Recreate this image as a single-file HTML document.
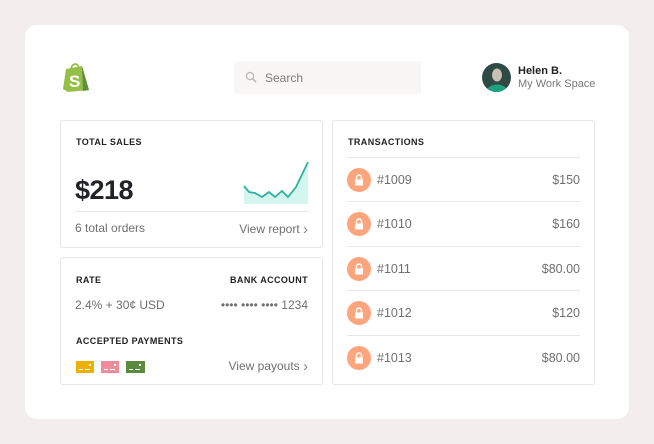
<!DOCTYPE html>
<html><head><meta charset="utf-8"><style>
*{margin:0;padding:0;box-sizing:border-box}
body{width:654px;height:444px;background:#f4eded;font-family:"Liberation Sans",sans-serif;position:relative;overflow:hidden;color:#212326}
.card{position:absolute;left:25px;top:25px;width:604px;height:394px;background:#fff;border-radius:12px}
.panel{position:absolute;border:1px solid #e6e6e6;border-radius:3px;background:#fff}
.lbl{position:absolute;font-size:9px;font-weight:bold;letter-spacing:.4px;color:#222}
.g{position:absolute;font-size:12px;color:#6f6f6f}
.g b{font-weight:normal;font-size:15px;color:#888;position:relative;top:1px}
.row{position:absolute;left:14px;right:14px;height:44px;border-top:1px solid #e8e8e8}
.ic{position:absolute;left:0;top:10px;width:24px;height:24px;border-radius:50%;background:#fea57e}
.ic svg{position:absolute;left:7px;top:6px}
.row .id{position:absolute;left:30px;top:15px;font-size:12.5px;color:#6f6f6f}
.row .amt{position:absolute;right:0;top:15px;font-size:12.5px;color:#6f6f6f}
</style></head><body>
<div class="card"></div>
<svg style="position:absolute;left:62px;top:62px" width="28" height="30" viewBox="0 0 28 30">
<path d="M9 8 C9 1 16 0 17 6" fill="none" stroke="#95bf47" stroke-width="1.8"/>
<path d="M1 27 L4 7 L20 4 L27 28 L6 30 Z" fill="#95bf47"/>
<path d="M20 4 L27 28 L21 29 Z" fill="#5e8e3e"/>
<text x="7" y="25" font-family="Liberation Sans" font-weight="bold" font-size="17" fill="#fff">S</text>
</svg>
<div style="position:absolute;left:234px;top:61px;width:187px;height:33px;background:#f8f7f5;border-radius:2px"></div>
<svg style="position:absolute;left:245px;top:71px" width="12" height="12" viewBox="0 0 12 12"><circle cx="5" cy="5" r="3.6" fill="none" stroke="#bbb" stroke-width="1.4"/><path d="M7.7 7.7 L11 11" stroke="#bbb" stroke-width="1.6"/></svg>
<div style="position:absolute;left:265px;top:71px;font-size:12px;color:#7a7a7a">Search</div>
<svg style="position:absolute;left:482px;top:63px" width="29" height="29" viewBox="0 0 29 29"><defs><clipPath id="c"><circle cx="14.5" cy="14.5" r="14.5"/></clipPath></defs><g clip-path="url(#c)"><rect width="29" height="29" fill="#2f4a45"/><ellipse cx="15" cy="12" rx="5" ry="6.5" fill="#c9c0b4"/><path d="M4 29 C6 19 24 19 26 29Z" fill="#1fa37d"/></g></svg>
<div style="position:absolute;left:518px;top:65px;font-size:11px;font-weight:bold;color:#222">Helen B.</div>
<div style="position:absolute;left:518px;top:78px;font-size:11px;color:#777">My Work Space</div>

<div class="panel" style="left:60px;top:120px;width:263px;height:128px">
<div class="lbl" style="left:15px;top:16px">TOTAL SALES</div>
<div style="position:absolute;left:14px;top:54px;font-size:27px;font-weight:bold;color:#212326;letter-spacing:-.5px">$218</div>
<svg style="position:absolute;left:182px;top:40px" width="66" height="43" viewBox="0 0 66 43"><path d="M1 25 L6 31 L12 32 L19 36 L26 31 L32 36 L39 30 L45 36 L53 26 L65 1 L65 43 L1 43Z" fill="#d5f6ee"/><path d="M1 25 L6 31 L12 32 L19 36 L26 31 L32 36 L39 30 L45 36 L53 26 L65 1" fill="none" stroke="#2db3a0" stroke-width="1.8"/></svg>
<div style="position:absolute;left:14px;right:14px;top:90px;border-top:1px solid #e8e8e8"></div>
<div class="g" style="left:14px;top:100px">6 total orders</div>
<div class="g" style="right:14px;top:99px">View report <b>›</b></div>
</div>

<div class="panel" style="left:60px;top:257px;width:263px;height:128px">
<div class="lbl" style="left:15px;top:17px">RATE</div>
<div class="lbl" style="right:14px;top:17px">BANK ACCOUNT</div>
<div class="g" style="left:14px;top:40px">2.4% + 30¢ USD</div>
<div class="g" style="right:14px;top:40px">•••• •••• •••• 1234</div>
<div class="lbl" style="left:15px;top:78px">ACCEPTED PAYMENTS</div>
<svg style="position:absolute;left:15px;top:103px" width="90" height="12" viewBox="0 0 90 12">
<rect x="0" y="0" width="18" height="12" fill="#ecb100"/><rect x="25" y="0" width="18" height="12" fill="#f08c9c"/><rect x="50" y="0" width="19" height="12" fill="#5a8a3e"/>
<g fill="#fff"><rect x="3" y="8" width="4" height="1"/><rect x="9" y="8" width="5" height="1"/><rect x="13" y="3" width="2" height="2"/><rect x="28" y="8" width="4" height="1"/><rect x="34" y="8" width="5" height="1"/><rect x="38" y="3" width="2" height="2"/><rect x="53" y="8" width="4" height="1"/><rect x="59" y="8" width="5" height="1"/><rect x="63" y="3" width="2" height="2"/></g></svg>
<div class="g" style="right:14px;top:99px">View payouts <b>›</b></div>
</div>

<div class="panel" style="left:332px;top:120px;width:263px;height:265px">
<div class="lbl" style="left:15px;top:16px">TRANSACTIONS</div>
<div class="row" style="top:36px"><div class="ic"><svg width="10" height="12" viewBox="0 0 10 12"><path d="M2.5 5.5 V3.5 a2.5 2.5 0 0 1 5 0 V5.5" fill="none" stroke="#fff" stroke-width="1.4"/><rect x="1" y="5.5" width="8" height="6" fill="#fff"/></svg></div><div class="id">#1009</div><div class="amt">$150</div></div>
<div class="row" style="top:80px"><div class="ic"><svg width="10" height="12" viewBox="0 0 10 12"><path d="M2.5 5.5 V3.5 a2.5 2.5 0 0 1 5 0 V5.5" fill="none" stroke="#fff" stroke-width="1.4"/><rect x="1" y="5.5" width="8" height="6" fill="#fff"/></svg></div><div class="id">#1010</div><div class="amt">$160</div></div>
<div class="row" style="top:125px"><div class="ic"><svg width="10" height="12" viewBox="0 0 10 12"><path d="M2.5 5.5 V3.5 a2.5 2.5 0 0 1 5 0 V5.5" fill="none" stroke="#fff" stroke-width="1.4"/><rect x="1" y="5.5" width="8" height="6" fill="#fff"/></svg></div><div class="id">#1011</div><div class="amt">$80.00</div></div>
<div class="row" style="top:169px"><div class="ic"><svg width="10" height="12" viewBox="0 0 10 12"><path d="M2.5 5.5 V3.5 a2.5 2.5 0 0 1 5 0 V5.5" fill="none" stroke="#fff" stroke-width="1.4"/><rect x="1" y="5.5" width="8" height="6" fill="#fff"/></svg></div><div class="id">#1012</div><div class="amt">$120</div></div>
<div class="row" style="top:214px"><div class="ic"><svg width="10" height="12" viewBox="0 0 10 12"><path d="M2.5 5.5 V3.5 a2.5 2.5 0 0 1 5 0 V5.5" fill="none" stroke="#fff" stroke-width="1.4"/><rect x="1" y="5.5" width="8" height="6" fill="#fff"/></svg></div><div class="id">#1013</div><div class="amt">$80.00</div></div>
</div>
</body></html>
